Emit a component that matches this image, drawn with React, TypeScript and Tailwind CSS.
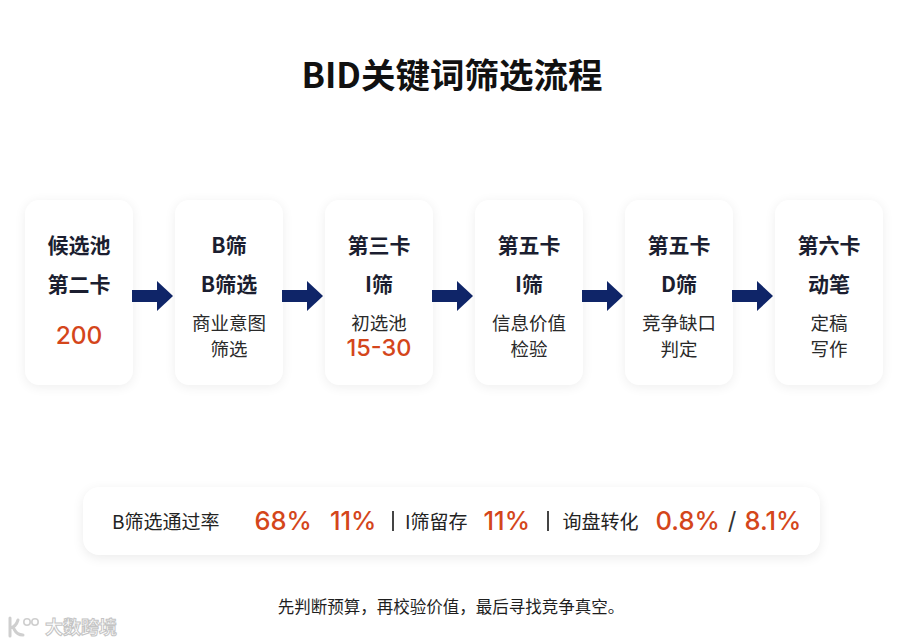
import React from "react";

const FONT = "font-['Noto_Sans_CJK_SC','Noto_Sans',sans-serif]";
const NUM = "font-['Inter','Noto_Sans_CJK_SC',sans-serif] font-medium text-[#d4461b] whitespace-nowrap shrink-0";
const LBL = "text-[19px] text-[#222] whitespace-nowrap shrink-0";

function Arrow() {
  return (
    <div className="w-[42px] h-full flex items-center">
      <svg width="41" height="30" viewBox="0 0 41 30" className="ml-[-1px] mt-[7px]">
        <rect x="0" y="9" width="26" height="12" fill="#0f2568" />
        <polygon points="25,0 41,15 25,30" fill="#0f2568" />
      </svg>
    </div>
  );
}

type CardProps = {
  l1: string;
  l2: string;
  small?: string[];
  num?: string;
};

function Card({ l1, l2, small, num }: CardProps) {
  return (
    <div className="w-[108px] h-[185px] rounded-[14px] bg-white shadow-[0_2px_12px_rgba(0,0,0,0.07)] flex flex-col items-center pt-[25px]">
      <div className="text-[21px] leading-[39px] font-bold text-[#1b1e30]">{l1}</div>
      <div className="text-[21px] leading-[39px] font-bold text-[#1b1e30]">{l2}</div>
      {small && small.length > 0 && (
        <div className="mt-[6px] flex flex-col items-center">
          {small.map((s, i) => (
            <div key={i} className="text-[18.5px] leading-[26px] text-[#2a2a2a]">
              {s}
            </div>
          ))}
          {num && <div className={`text-[23.5px] leading-[26px] ${NUM}`}>{num}</div>}
        </div>
      )}
      {!small && num && <div className={`mt-[19px] text-[24.5px] leading-[26px] ${NUM}`}>{num}</div>}
    </div>
  );
}

export default function App() {
  return (
    <div className={`relative w-[900px] h-[643px] bg-white overflow-hidden flex flex-col items-center ${FONT}`}>
      <h1 className="mt-[52px] text-[34.5px] leading-[42px] font-bold text-[#111] ml-[4px]">BID关键词筛选流程</h1>

      <div className="self-start ml-[25px] mt-[106px] h-[185px] flex">
        <Card l1="候选池" l2="第二卡" num="200" />
        <Arrow />
        <Card l1="B筛" l2="B筛选" small={["商业意图", "筛选"]} />
        <Arrow />
        <Card l1="第三卡" l2="I筛" small={["初选池"]} num="15-30" />
        <Arrow />
        <Card l1="第五卡" l2="I筛" small={["信息价值", "检验"]} />
        <Arrow />
        <Card l1="第五卡" l2="D筛" small={["竞争缺口", "判定"]} />
        <Arrow />
        <Card l1="第六卡" l2="动笔" small={["定稿", "写作"]} />
      </div>

      <div className="self-start ml-[83px] mt-[102px] w-[737px] h-[68px] rounded-[16px] bg-white shadow-[0_3px_12px_rgba(0,0,0,0.08)] flex items-center pl-[29px]">
        <span className={LBL}>B筛选通过率</span>
        <span className={`ml-[35px] text-[25.5px] ${NUM}`}>68%</span>
        <span className={`ml-[18px] text-[25.5px] ${NUM}`}>11%</span>
        <span className="ml-[16px] w-[1.5px] h-[20px] bg-[#444] shrink-0" />
        <span className={`ml-[11px] ${LBL}`}>I筛留存</span>
        <span className={`ml-[16px] text-[25.5px] ${NUM}`}>11%</span>
        <span className="ml-[17px] w-[1.5px] h-[20px] bg-[#444] shrink-0" />
        <span className={`ml-[14px] ${LBL}`}>询盘转化</span>
        <span className={`ml-[17px] text-[25.5px] ${NUM}`}>0.8%</span>
        <span className="ml-[8px] text-[24px] text-[#333] font-['Inter',sans-serif] shrink-0">/</span>
        <span className={`ml-[8px] text-[25.5px] ${NUM}`}>8.1%</span>
      </div>

      <div className="mt-[39px] text-[16.5px] leading-[24px] text-[#1e1e1e] ml-[2px]">
        先判断预算，再校验价值，最后寻找竞争真空。
      </div>

      <div className="absolute left-[7px] top-[613px] flex items-center gap-[4px]">
        <svg width="34" height="24" viewBox="0 0 34 24">
          <path d="M3 3 L3 21 M3 13 Q9 12 11 5 M7 14 Q10 20 16 20" fill="none" stroke="#cfcfcf" strokeWidth="3" strokeLinecap="round" />
          <circle cx="20" cy="7" r="3.2" fill="none" stroke="#cfcfcf" strokeWidth="1.6" />
          <circle cx="28" cy="7" r="3.2" fill="none" stroke="#cfcfcf" strokeWidth="1.6" />
        </svg>
        <span className="text-[18px] font-bold text-white [-webkit-text-stroke:1px_#c4c4c4]">大数跨境</span>
      </div>
    </div>
  );
}
